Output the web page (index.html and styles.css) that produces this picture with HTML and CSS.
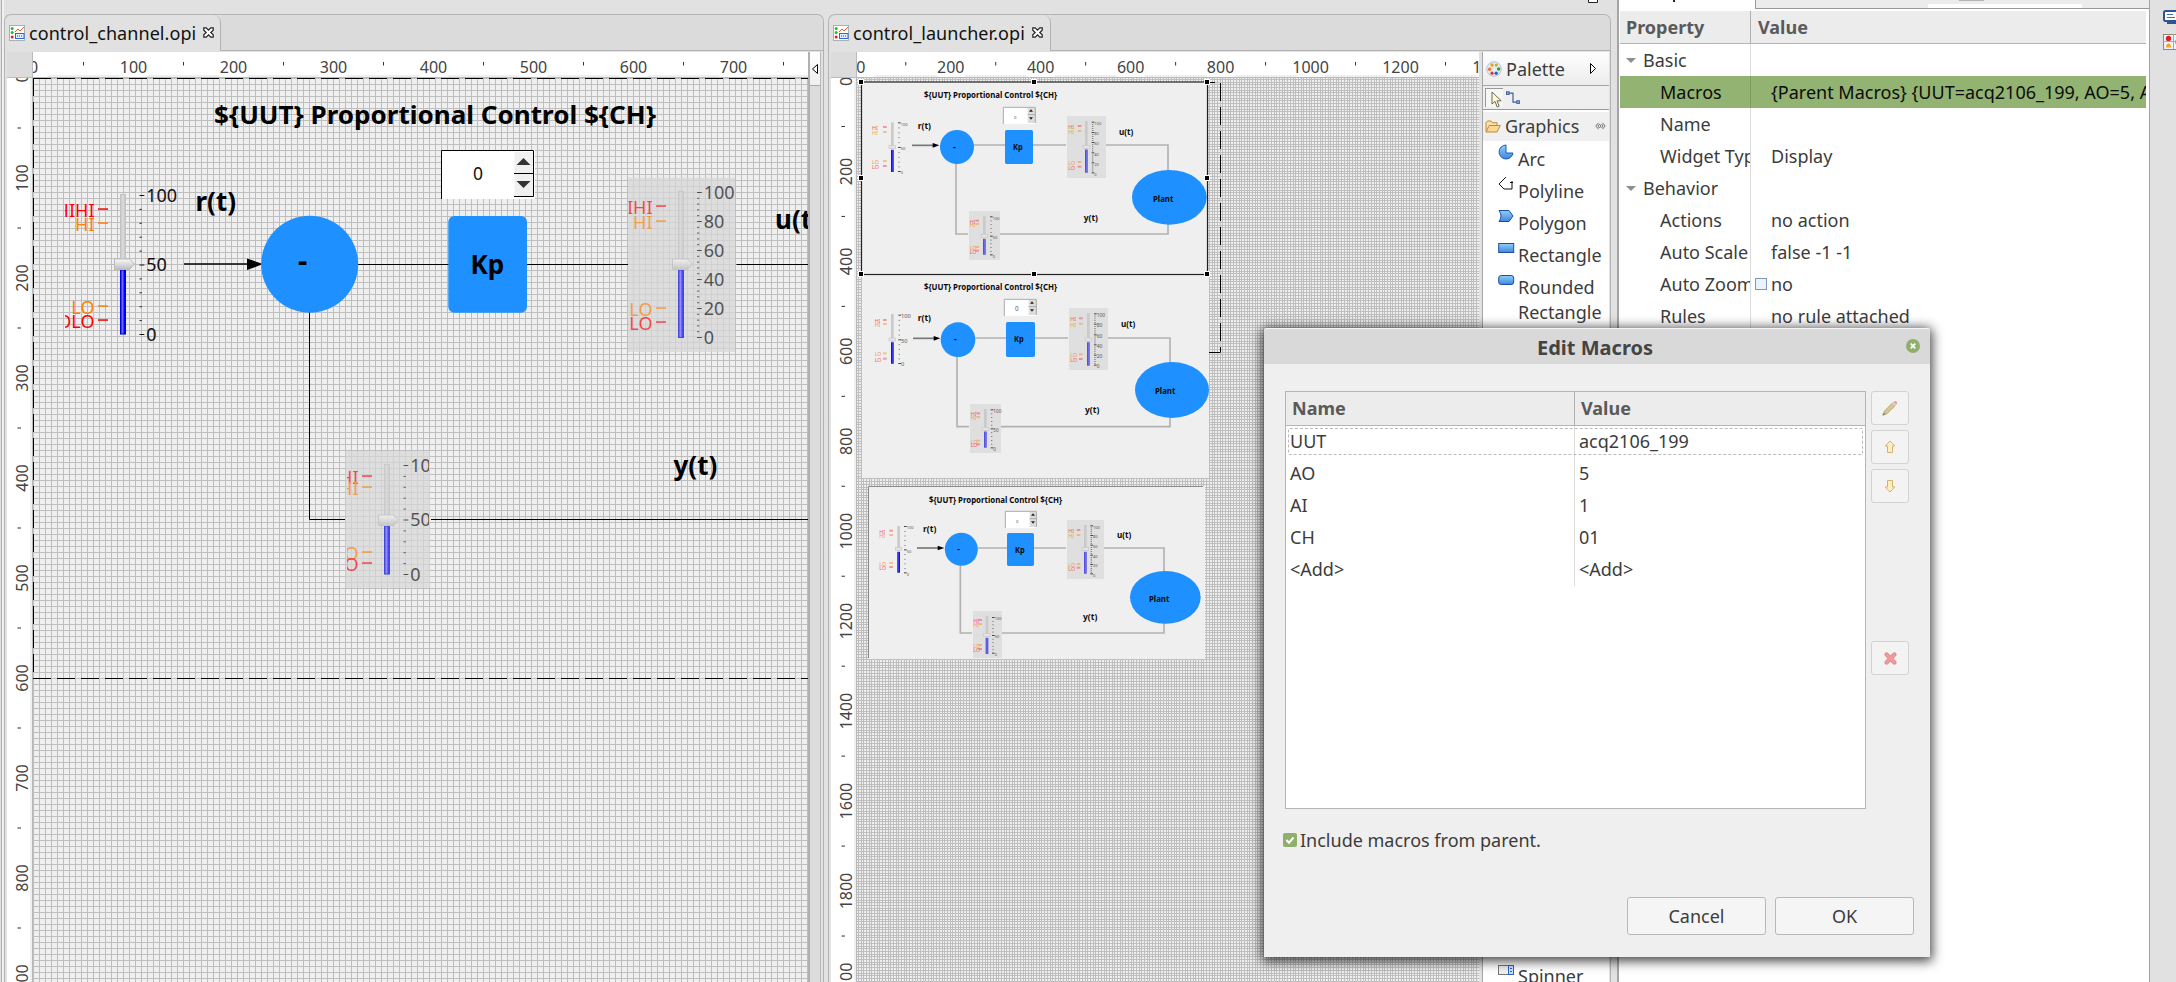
FILE: index.html
```html
<!DOCTYPE html>
<html lang="en">
<head>
<meta charset="utf-8">
<title>OPI Editor</title>
<link rel="stylesheet" href="styles.css">
</head>
<body>
<svg class="defs" width="0" height="0">
  <defs>
    <linearGradient id="track" x1="0" x2="1" y1="0" y2="0"><stop offset="0" stop-color="#c4c4c4"/><stop offset=".5" stop-color="#dedede"/><stop offset="1" stop-color="#bdbdbd"/></linearGradient>
    <linearGradient id="level" x1="0" x2="1" y1="0" y2="0"><stop offset="0" stop-color="#0000ff"/><stop offset=".4" stop-color="#6a6aff"/><stop offset=".8" stop-color="#0000ff"/></linearGradient>
    <linearGradient id="knob" x1="0" x2="0" y1="0" y2="1"><stop offset="0" stop-color="#fafafa"/><stop offset="1" stop-color="#bcbcbc"/></linearGradient>
    <linearGradient id="sky" x1="0" x2="0" y1="0" y2="1"><stop offset="0" stop-color="#8fd0f5"/><stop offset="1" stop-color="#3f86e0"/></linearGradient>
    <symbol id="opi" viewBox="0 0 16 16"><rect x=".5" y=".5" width="15" height="15" fill="#fff" stroke="#a9b0b8"/><circle cx="3.2" cy="3.4" r="1.5" fill="#1fc41f"/><circle cx="3.2" cy="7.6" r="1.5" fill="#1fc41f"/><circle cx="3.2" cy="12" r="1.5" fill="#e02020"/><path d="M6 7l3-3 2 2 4-4" fill="none" stroke="#e86030"/><rect x="6.5" y="8.5" width="8.5" height="5" fill="#e4eefc" stroke="#2a6ad0"/><path d="M8 11h6" stroke="#444" stroke-dasharray="1 1"/></symbol>
    <symbol id="close" viewBox="0 0 11 11"><path d="M.8.8h2.4l2.3 2.4L7.8.8h2.4v2.4L7.8 5.5l2.4 2.3v2.4H7.8L5.5 7.8l-2.3 2.4H.8V7.8l2.4-2.3L.8 3.2z" fill="#fff" stroke="#222" stroke-width="1.2"/></symbol>
    <pattern id="grid6" x="33" y="78" width="6" height="6" patternUnits="userSpaceOnUse"><path d="M0 .5H6M.5 0V6" stroke="#bebebe"/></pattern>
    <pattern id="grid27" x="861" y="82" width="27" height="27" patternUnits="userSpaceOnUse"><path d="M0 .5H27M0 2.5H27M0 5.5H27M0 8.5H27M0 10.5H27M0 13.5H27M0 16.5H27M0 18.5H27M0 21.5H27M0 24.5H27M.5 0V27M2.5 0V27M5.5 0V27M8.5 0V27M10.5 0V27M13.5 0V27M16.5 0V27M18.5 0V27M21.5 0V27M24.5 0V27" stroke="#bebebe"/></pattern>
    <clipPath id="clipA"><rect x="65" y="180" width="130" height="170"/></clipPath>
    <clipPath id="clipB"><rect x="628.5" y="177" width="107" height="175"/></clipPath>
    <clipPath id="clipC"><rect x="347" y="450" width="82" height="140"/></clipPath>
  </defs>
</svg>

<div class="workbench">
  <section class="editor editor-left">
    <header class="tabs">
      <div class="tab tab-channel"><svg class="tab-icon"><use href="#opi"/></svg><span>control_channel.opi</span><svg class="tab-close"><use href="#close"/></svg></div>
      <div class="tab-rest"></div>
    </header>
    <div class="editor-body">
      <div class="sheet sheet-left">
        <div class="corner"></div>
        <svg class="ruler-top" id="topL" viewBox="33 52 775 26" width="775" height="26"></svg>
        <svg class="ruler-side" id="sideL" viewBox="7 78 26 904" width="26" height="904"></svg>
        <svg class="canvas" id="canvasL" viewBox="33 78 775 904" width="775" height="904"></svg>
      </div>
      <div class="flyout"><div class="flyout-btn"><svg width="8" height="12" viewBox="0 0 8 12"><path d="M6.5 1.5v9L1.5 6z" fill="#fff" stroke="#000"/></svg></div></div>
    </div>
  </section>

  <section class="editor editor-right">
    <header class="tabs">
      <div class="tab tab-launcher"><svg class="tab-icon"><use href="#opi"/></svg><span>control_launcher.opi</span><svg class="tab-close"><use href="#close"/></svg></div>
      <div class="tab-rest"><svg class="maximize" width="10" height="3" viewBox="0 0 10 3"><path d="M.5 0v2.500h9V0" fill="#fff" stroke="#222"/></svg></div>
    </header>
    <div class="editor-body">
      <div class="sheet sheet-right">
        <div class="corner"></div>
        <svg class="ruler-top" id="topR" viewBox="857 52 622 26" width="622" height="26"></svg>
        <svg class="ruler-side" id="sideR" viewBox="831 78 26 904" width="26" height="904"></svg>
        <svg class="canvas" id="canvasR" viewBox="857 78 622 904" width="622" height="904"></svg>
      </div>
      <aside class="palette">
        <div class="pal-head">
          <svg width="16" height="16" viewBox="0 0 16 16"><circle cx="8" cy="8" r="7.3" fill="#e3ebf6" stroke="#b4c2d8"/><circle cx="6" cy="4" r="1.7" fill="#f0a010"/><circle cx="10.3" cy="4" r="1.6" fill="#c0b020"/><circle cx="12.6" cy="8" r="1.7" fill="#30a030"/><circle cx="3.6" cy="8.2" r="1.7" fill="#f07820"/><circle cx="6" cy="12.2" r="1.6" fill="#e03030"/><circle cx="10.2" cy="12.2" r="1.7" fill="#2a62c8"/></svg>
          <span>Palette</span>
          <svg class="pal-arrow" width="8" height="13" viewBox="0 0 8 13"><path d="M1.500 1.500v10l5-5z" fill="#fff" stroke="#000"/></svg>
        </div>
        <div class="pal-tools">
          <span class="tool-on"><svg width="12" height="17" viewBox="0 0 12 17"><path d="M1 1v12l3-2.600L6.200 16l2-.9L6 9.800h4.200z" fill="#fffbd8" stroke="#6a6a50"/></svg></span>
          <svg width="14" height="14" viewBox="0 0 14 14"><path d="M2 2.200h5v9h5" fill="none" stroke="#3d5f9a" stroke-width="1.200"/><rect x=".5" y=".8" width="2.600" height="2.600" fill="#9db8e0" stroke="#3d5f9a"/><rect x="10.800" y="9.800" width="2.600" height="2.600" fill="#9db8e0" stroke="#3d5f9a"/></svg>
        </div>
        <div class="pal-group">
          <svg width="16" height="13" viewBox="0 0 16 13"><path d="M1 11.500V2.800L2.500 1h3.600l1.300 1.700H12v2.600" fill="#fbe0a8" stroke="#c08a3a"/><path d="M1 12L4.200 5.500H15.300L12 12z" fill="#fad792" stroke="#c08a3a"/></svg>
          <span>Graphics</span>
          <svg class="pin" width="11" height="8" viewBox="0 0 11 8"><path d="M3.500 .8L.8 4l2.700 3.200M7.500 .8L10.200 4 7.500 7.200M4.500 2L3 4l1.500 2L6 4zM6.500 2L8 4 6.500 6" fill="none" stroke="#666" stroke-width=".9"/></svg>
        </div>
        <ul class="pal-items">
          <li><svg width="17" height="17" viewBox="0 0 17 17"><path d="M8 1A7 7 0 1 0 15 9H8z" fill="url(#sky)" stroke="#1d5cb8"/></svg><span>Arc</span></li>
          <li><svg width="17" height="17" viewBox="0 0 17 17"><path d="M8 1L1 8l5 5h8V5M12 6.500h3" fill="none" stroke="#111"/></svg><span>Polyline</span></li>
          <li><svg width="17" height="17" viewBox="0 0 17 17"><path d="M1 2.500h10L15 8l-4 5.500H1Q5 8 1 2.500z" fill="url(#sky)" stroke="#1d4f9c"/></svg><span>Polygon</span></li>
          <li><svg width="17" height="17" viewBox="0 0 17 17"><rect x=".7" y="3.500" width="15" height="9" fill="url(#sky)" stroke="#1d4f9c"/></svg><span>Rectangle</span></li>
          <li class="two"><svg width="17" height="17" viewBox="0 0 17 17"><rect x=".7" y="3.500" width="15" height="9" rx="2.500" fill="url(#sky)" stroke="#1d4f9c"/></svg><span>Rounded<br>Rectangle</span></li>
        </ul>
        <div class="pal-last"><svg width="17" height="11" viewBox="0 0 17 11"><rect x=".5" y=".5" width="15" height="9" fill="#f0f0f0" stroke="#777"/><rect x="10.500" y=".5" width="5" height="9" fill="#cfe0fa" stroke="#2a62c8"/><path d="M12 3.500h2M12 6.500h2" stroke="#2a62c8"/></svg><span>Spinner</span></div>
      </aside>
    </div>
  </section>

  <section class="props">
    <div class="props-tabs"><div class="props-tab"></div><div class="props-tools"></div></div>
    <div class="props-table">
      <div class="prow phead"><div>Property</div><div>Value</div></div>
      <div class="prow cat"><div><i></i>Basic</div><div></div></div>
      <div class="prow sel"><div>Macros</div><div>{Parent Macros} {UUT=acq2106_199, AO=5, AI=1</div></div>
      <div class="prow"><div>Name</div><div></div></div>
      <div class="prow"><div>Widget Type</div><div>Display</div></div>
      <div class="prow cat"><div><i></i>Behavior</div><div></div></div>
      <div class="prow"><div>Actions</div><div>no action</div></div>
      <div class="prow"><div>Auto Scale</div><div>false -1 -1</div></div>
      <div class="prow check"><div>Auto Zoom</div><div><b></b>no</div></div>
      <div class="prow"><div>Rules</div><div>no rule attached</div></div>
    </div>
  </section>

  <aside class="trim">
    <svg width="14" height="14" viewBox="0 0 14 14"><rect x="1" y="1" width="14" height="10" rx="1.500" fill="#fff" stroke="#2d5596" stroke-width="2"/><path d="M4 4.500h6M4 7.500h8" stroke="#3b6bb5"/><path d="M4 13h10" stroke="#2d5596" stroke-width="2"/></svg>
    <svg width="14" height="16" viewBox="0 0 14 16"><rect x=".5" y=".5" width="14" height="15" fill="#eef4fc" stroke="#8a8a72"/><circle cx="5.500" cy="4.500" r="2.700" fill="#dc2020"/><path d="M0 7.500h14M10.500 0v15" stroke="#9aaecb"/><path d="M3 13.500q0-4 2.500-4t2.500 4z" fill="#f5a623"/><path d="M14 4q-3 4 0 8" fill="#dbe7f7" stroke="#7a98c4"/></svg>
  </aside>
</div>

<div class="dialog">
  <div class="dlg-title"><span>Edit Macros</span><svg class="dlg-close" width="14" height="14" viewBox="0 0 14 14"><circle cx="7" cy="7" r="7" fill="#8fb06c"/><path d="M4.700 4.700l4.600 4.600M9.300 4.700L4.700 9.300" stroke="#fff" stroke-width="1.700"/></svg></div>
  <div class="dlg-main">
    <div class="macros">
      <div class="mrow mhead"><div>Name</div><div>Value</div></div>
      <div class="mrow focus"><div>UUT</div><div>acq2106_199</div></div>
      <div class="mrow"><div>AO</div><div>5</div></div>
      <div class="mrow"><div>AI</div><div>1</div></div>
      <div class="mrow"><div>CH</div><div>01</div></div>
      <div class="mrow"><div>&lt;Add&gt;</div><div>&lt;Add&gt;</div></div>
    </div>
    <div class="side-btns">
      <button class="sbtn"><svg width="16" height="16" viewBox="0 0 16 16"><path d="M.8 15.200L2.600 10.800 10.500 2.900 13.200 5.600 5.200 13.500z" fill="#dcc690" stroke="#b29a68" stroke-width=".8"/><path d="M10 3.400L11.600 1.800 14.300 4.500 12.700 6.100z" fill="#ccd0d8"/><path d="M11.600 1.800Q13 .3 14.600 1.500 16 3 14.300 4.500z" fill="#f09a90"/><path d="M.5 15.500l1.200-3 1.900 1.900z" fill="#888"/></svg></button>
      <button class="sbtn"><svg width="12" height="14" viewBox="0 0 12 14"><path d="M6 1l4.800 5H8.500v6.500h-5V6H1.200z" fill="#fbf0c4" stroke="#d6b26c"/></svg></button>
      <button class="sbtn"><svg width="12" height="14" viewBox="0 0 12 14"><path d="M6 13l4.800-5H8.500V1.500h-5V8H1.200z" fill="#fbf0c4" stroke="#d6b26c"/></svg></button>
      <button class="sbtn del"><svg width="13" height="13" viewBox="0 0 13 13"><path d="M2.600 2.600l7.800 7.800M10.400 2.600l-7.800 7.800" stroke="#dc8888" stroke-width="4.200" stroke-linecap="round"/><path d="M2.600 2.600l7.800 7.800M10.400 2.600l-7.800 7.800" stroke="#f29a9e" stroke-width="2.600" stroke-linecap="round"/></svg></button>
    </div>
  </div>
  <label class="inherit"><svg width="14" height="14" viewBox="0 0 14 14"><rect width="14" height="14" rx="2" fill="#8fb06c"/><path d="M3.500 7l2.500 2.800L10.500 4.500" fill="none" stroke="#fff" stroke-width="2"/></svg><span>Include macros from parent.</span></label>
  <div class="dlg-foot"><button>Cancel</button><button>OK</button></div>
</div>
<script src="script.js"></script>
</body>
</html>
```
FILE: styles.css
```css
* { box-sizing: border-box; }
body { margin: 0; width: 2176px; height: 982px; overflow: hidden; background: #e1e1e1; font: 18px/24px "Noto Sans", sans-serif; color: #3c3c3c; }
.defs { position: absolute; }
svg { display: block; flex: none; }
svg text { font-family: "Noto Sans", sans-serif; }

.workbench { display: flex; width: 2176px; height: 982px; padding-left: 4px; box-shadow: inset 1px 0 #e1e1e1, inset 2px 0 #b0b0b0, inset 4px 0 #f0f0f0; }
.editor { height: 968px; margin-top: 14px; display: flex; flex-direction: column; border: 1px solid #b3b3b3; border-bottom: 0; border-radius: 7px 7px 0 0; background: #e1e1e1; }
.editor-left { width: 820px; }
.editor-right { width: 783px; margin-left: 4px; }
.tabs { display: flex; height: 36px; flex: none; }
.tab { display: flex; align-items: center; border-right: 1px solid #b3b3b3; border-radius: 7px 7px 0 0; padding: 0 0 1px 4px; color: #111; letter-spacing: .06px; }
.tab-channel { width: 216px; }
.tab-launcher { width: 222px; }
.tab-icon { width: 16px; height: 16px; margin-right: 4px; }
.tab-close { width: 11px; height: 11px; margin-left: 7px; }
.tab-rest { flex: 1; background: #dbdbdb; border-bottom: 1px solid #b3b3b3; border-radius: 0 7px 0 0; position: relative; }
.maximize { position: absolute; top: -15px; right: 12px; }
.editor-body { display: flex; padding: 1px 0 0 2px; height: 931px; }
.sheet { display: grid; grid-template-columns: 26px auto; grid-template-rows: 26px 904px; flex: none; }
.corner { background: #dcdcdc; border-right: 1px solid #bbb; border-bottom: 1px solid #bbb; }
.ruler-top, .ruler-side { background: #fff; }
.canvas { background: #efefef; }
.flyout { width: 13px; background: #dcdcdc; border-left: 2px solid #b0b0b0; border-right: 1px solid #b8b8b8; }
.flyout-btn { height: 34px; background: linear-gradient(#fff, #eee); border-bottom: 1px solid #aaa; padding: 11px 0 0 1px; }

.palette { width: 127px; margin-left: 3px; border-left: 1px solid #a6a6a6; background: #fff; position: relative; }
.pal-head { height: 34px; display: flex; align-items: center; padding: 0 0 0 3px; gap: 4px; background: linear-gradient(#fefefe, #ececec); border-bottom: 1px solid #a6a6a6; }
.pal-arrow { margin-left: 20px; }
.pal-tools { height: 24px; display: flex; align-items: center; padding-left: 2px; gap: 3px; background: #efefef; border-bottom: 1px solid #999; }
.tool-on { width: 18px; height: 19px; padding: 2px 0 0 5px; background: #f6f6f6; border-left: 1px solid #999; border-top: 1px solid #999; }
.pal-group { height: 29px; margin-top: 2px; display: flex; align-items: center; padding: 0 0 1px 2px; gap: 4px; background: #f0f0f0; }
.pin { margin-left: 12px; }
.pal-items { list-style: none; margin: 3px 0 0; padding: 0 0 0 15px; }
.pal-items li { display: flex; gap: 3px; height: 32px; }
.pal-items span { padding-top: 3px; line-height: 25px; white-space: nowrap; }
.pal-last { position: absolute; top: 913px; left: 15px; display: flex; gap: 3px; line-height: 22px; }

.props { width: 533px; margin-left: 6px; border-left: 2px solid #a4a4a4; border-right: 1px solid #a4a4a4; background: #fff; }
.props-tabs { display: flex; height: 11px; }
.props-tab { width: 136px; background: linear-gradient(#222, #222) 54px 0 / 2px 2px no-repeat; }
.props-tools { flex: 1; height: 9px; background: linear-gradient(#b4b4b4, #b4b4b4) 203px 0 / 25px 1px no-repeat, linear-gradient(#fff, #fff) 172px 4px / 154px 4px no-repeat #ececec; border-left: 1px solid #999; border-bottom: 1px solid #999; }
.props-table { margin: 0 3px 0 1px; }
.prow { display: grid; grid-template-columns: 131px 1fr; height: 32px; line-height: 32px; white-space: nowrap; }
.prow > div { overflow: hidden; padding-left: 40px; border-right: 1px solid #dcdcdc; }
.prow > div + div { padding-left: 20px; border: 0; }
.prow.phead { height: 33px; background: #ececec; border-bottom: 1px solid #b5b5b5; font-weight: bold; color: #5a5a5a; }
.phead > div { padding-left: 6px; border-color: #b0b0b0; }
.prow.phead > div + div { padding-left: 7px; }
.prow.cat > div { padding-left: 6px; display: flex; align-items: center; }
.cat i { border: 5px solid transparent; border-top-color: #8e8e8e; border-bottom: 0; margin: 0 7px 0 0; }
.prow.sel { background: #92b372; color: #0c0c0c; }
.prow.sel > div { border-color: #7f9f60; }
.prow.check > div + div { display: flex; align-items: center; gap: 4px; padding-left: 4px; }
.check b { width: 12px; height: 12px; background: #e8f3fc; border: 1px solid #8796b0; }
.trim { width: 26px; padding: 10px 0 0 13px; display: flex; flex-direction: column; gap: 10px; }

.dialog { position: absolute; left: 1264px; top: 328px; width: 666px; height: 629px; background: #efefef; border-radius: 3px 3px 0 0; box-shadow: 0 2px 12px 2px rgba(0,0,0,.75); }
.dlg-title { height: 36px; background: #d9d9d9; border-top: 1px solid #f4f4f4; border-radius: 3px 3px 0 0; display: flex; align-items: center; justify-content: center; font-weight: bold; font-size: 20px; position: relative; color: #444; padding: 2px 4px 0 0; }
.dlg-close { position: absolute; right: 10px; top: 10px; }
.dlg-main { display: flex; gap: 5px; padding: 27px 0 0 21px; }
.macros { width: 581px; height: 418px; background: #fff; border: 1px solid #b5b5b5; }
.mrow { display: grid; grid-template-columns: 289px 1fr; height: 32px; line-height: 30px; padding: 0 2px 0 0; }
.mrow > div { padding-left: 4px; border-right: 1px solid #dcdcdc; }
.mrow > div + div { border: 0; }
.mrow.mhead { height: 34px; line-height: 33px; background: #ececec; border-bottom: 1px solid #b5b5b5; font-weight: bold; color: #5a5a5a; }
.mhead > div { border-color: #b0b0b0; padding-left: 6px; }
.focus { position: relative; }
.focus::after { content: ""; position: absolute; left: 2px; right: 2px; top: 2px; bottom: 3px; border: 1px dashed #bbb; border-radius: 2px; }
.side-btns { display: flex; flex-direction: column; gap: 5px; }
button { font: 18px "Noto Sans", sans-serif; color: #3c3c3c; background: #f5f5f5; border: 1px solid #b8b8b8; border-radius: 3px; padding: 0; }
.sbtn { width: 38px; height: 34px; display: flex; align-items: center; justify-content: center; border-color: #d3d3d3; background: #f3f3f3; }
.sbtn.del { margin-top: 133px; }
.inherit { display: flex; align-items: center; gap: 3px; padding: 19px 0 0 19px; }
.dlg-foot { display: flex; justify-content: flex-end; gap: 9px; padding: 45px 16px 0 0; }
.dlg-foot button { width: 139px; height: 38px; }
```
FILE: script.js
```
const $ = id => document.getElementById(id);
const text = (x, y, s, size, o = '') => `<text x="${x}" y="${y}" font-size="${size}" ${o}>${s}</text>`;
const rect = (x0, y0, x1, y1, fill, o = '') => `<rect x="${x0}" y="${y0}" width="${x1 - x0}" height="${y1 - y0}" fill="${fill}" ${o}/>`;
const line = (d, c, w) => `<path d="${d}" fill="none" stroke="${c}" stroke-width="${w}"/>`;

/* Rulers */
function rulers(top, side, x0, y0, xLeft, step, unit, xEnd) {
  let h = '', v = '';
  for (let i = 0; x0 + i * step < xEnd + 20; i++) {
    const x = x0 + i * step;
    h += text(x, 72.7, i * unit, 16, 'text-anchor="middle" fill="#444"') + rect(x + step / 2 - .5, 62, x + step / 2 + .5, 65.5, '#333');
    h += rect(x + 14, 75, x + step - 14, 77, '#efefef');
  }
  for (let i = 0; y0 + i * step < 1010; i++) {
    const y = y0 + i * step, bx = xLeft + 21.3;
    v += `<text transform="translate(${bx} ${y}) rotate(-90)" font-size="16" text-anchor="middle" fill="#444">${i * unit}</text>`;
    v += rect(xLeft + 10.5, y + step / 2 - .5, xLeft + 14, y + step / 2 + .5, '#333');
  }
  $(top).innerHTML = h + rect(0, 77, 2000, 78, '#b8b8b8');
  $(side).innerHTML = v + rect(xLeft + 23, 0, xLeft + 25, 982, '#efefef') + rect(xLeft + 25, 0, xLeft + 26, 982, '#b8b8b8');
}
rulers('topL', 'sideL', 33.5, 78, 7, 100, 100, 808);
rulers('topR', 'sideR', 860.8, 81.5, 831, 89.95, 200, 1479);

/* Slider on the channel display */
function slider(s) {
  let o = '';
  s.alarms.forEach(([y, t], i) => {
    const c = i % 3 ? '#ff8000' : '#ff0000';
    o += rect(s.dash, y - .7, s.dash + 10, y + .8, c) + text(s.dash - 3.5, y + 7.7, t, 18, `text-anchor="end" fill="${c}"`);
  });
  o += rect(s.x + .5, s.y0, s.x + 5.5, s.y1, 'url(#track)', 'stroke="#c2c2c2"');
  o += rect(s.x + .5, s.mid + 6, s.x + 5.5, s.y1, 'url(#level)', 'stroke="#0000e0"');
  o += `<path d="M${s.x - 5.5} ${s.mid - 5}h15l5 5-5 5.500h-15z" fill="url(#knob)" stroke="#bbb"/>`;
  const n = s.labels.length, gap = (s.last - s.first) / (n - 1);
  for (let i = 0; i < n; i++) {
    const y = s.first + i * gap;
    o += rect(s.tick, y - .5, s.tick + 4.8, y + .5, '#111') + text(s.tick + 6.7, y + 6, s.labels[i], 18, 'fill="#111"');
    if (i < n - 1) for (let k = 1; k < 5; k++) o += rect(s.tick, y + k * gap / 5 - .5, s.tick + 2.3, y + k * gap / 5 + .5, '#222');
  }
  return `<g clip-path="url(#${s.clip})" opacity="${s.fade ? .68 : 1}">${o}</g>`;
}
const bold = 'font-weight="bold" fill="#000"';
const blue = '#1e90ff';
$('canvasL').innerHTML =
  rect(33, 78, 808, 982, 'url(#grid6)') +
  `<path d="M33 78.500H808M33.500 78V678M33 678.500H808" stroke="#000" fill="none" stroke-dasharray="18 6"/>` +
  text(214, 124, '${UUT} Proportional Control ${CH}', 25.5, bold + ' textLength="442" lengthAdjust="spacingAndGlyphs"') +
  line('M184 264H250', '#000', 1.6) + '<path d="M247 258.500L263 264l-16 6z"/>' +
  line('M309.500 264V519.500H345M431 519.500H808M357 264.500H449M526 264.500H628M736.500 264.500H808', '#000', 1) +
  `<circle cx="309.700" cy="264.300" r="48.500" fill="${blue}"/>` + text(298, 271, '-', 29, bold) +
  rect(448.3, 216, 527, 312.7, blue, 'rx="6"') + text(470.5, 273.7, 'Kp', 26, bold) +
  text(195.5, 210.7, 'r(t)', 26, bold) + text(775, 228.5, 'u(t)', 26, bold) + text(673.5, 475, 'y(t)', 26, bold) +
  rect(441, 150, 535, 199, '#fff') + rect(514.5, 152, 533, 196, '#f0f0f0') +
  line('M441.500 199V150.500H533.500V196.500H514M514 173.500H533', '#000', 1) +
  '<path d="M516.500 165h14l-7-7zM516.500 181h14l-7 7z" fill="#333"/>' + text(473, 180, '0', 17.5, 'fill="#111"') +
  rect(628, 177.5, 735, 352, 'rgba(215,215,215,.72)') + rect(345.5, 451, 430, 588, 'rgba(215,215,215,.72)') +
  slider({ clip: 'clipA', x: 120, y0: 194.5, y1: 334, mid: 264, dash: 98, tick: 139.5, first: 195.5, last: 334.5, labels: [100, 50, 0], alarms: [[209, 'HIHI'], [223, 'HI'], [306, 'LO'], [320, 'LOLO']] }) +
  slider({ fade: 1, clip: 'clipB', x: 678, y0: 191.5, y1: 337.5, mid: 264, dash: 656, tick: 697, first: 192.5, last: 337.5, labels: [100, 80, 60, 40, 20, 0], alarms: [[206, 'HIHI'], [221, 'HI'], [308, 'LO'], [322, 'LOLO']] }) +
  slider({ fade: 1, clip: 'clipC', x: 384, y0: 464.5, y1: 574, mid: 520, dash: 362, tick: 403.5, first: 465.5, last: 574.5, labels: [100, 50, 0], alarms: [[476, 'HI'], [487, 'HI'], [552, 'LO'], [563, 'LO']] });

/* Linked previews, drawn at one third of their unit size */
function miniSlider(s, live) {
  let o = '';
  const names = ['HI', 'HI', 'LO', 'LO'];
  s.al.forEach((y, i) => {
    const c = i % 3 ? '#f0a050' : '#f46060';
    o += rect(s.d, y - 3, s.d + 11, y + 3, c, 'opacity=".6"') + text(s.tx, y + 9, names[i], 16, `fill="${c}"`);
  });
  o += rect(s.x, s.y0, s.x + 8, s.y1, '#cacaca') + rect(s.x, s.m + 9, s.x + 8, s.y1, live ? '#1010e8' : '#5050e4') +
    rect(s.x + 3, s.m + 9, s.x + 5, s.y1, live ? '#4848f8' : '#7878f0') + rect(s.x - 6, s.m - 4, s.x + 13, s.m + 5, '#e4e4e4', 'stroke="#c8c8c8" stroke-width="2"');
  const n = s.lab.length;
  for (let i = 0; i < n; i++) {
    const y = s.lab[i], v = 100 - i * 100 / (n - 1);
    o += rect(s.l - 8, y - 3, s.l, y, '#444') + text(s.l, y + 7, v, s.fs || 12, 'fill="#555"');
    if (i < n - 1) for (let k = 1; k < 5; k++) { const t = y + (s.lab[i + 1] - y) * k / 5; o += rect(s.l - 7, t - 2, s.l - 3, t, '#555'); }
  }
  return o;
}
function mini(oy, p) {
  const b = 'font-weight="bold" fill="#0a0a0a" lengthAdjust="spacingAndGlyphs"', g = '#b2b2b2';
  const [cx, cy, r] = p.circ, [kx0, ky0, kx1, ky1] = p.kp, [sx, sy, sx1, sy1] = p.spin, [ex, ey, rx, ry] = p.plant;
  const B = p.B.bg, C = p.C.bg;
  return `<g transform="translate(820 ${oy}) scale(.333333)">` +
    text(...p.title, '${UUT} Proportional Control ${CH}', 25, b + ' textLength="399"') +
    line(`M${cx + r} ${p.ly}H${kx0}M${kx1} ${p.ly}H${B[0] - 3}M${B[2] - 2} ${p.ly}H${p.rx}V${ey}M${p.rx} ${ey}V${p.by}H${C[2] - 5}M${C[0] - 3} ${p.by}H${cx - 3}V${cy}`, g, 5) +
    line(`M${p.arr[0]} ${p.arr[1]}h64`, '#777', 5) + `<path d="M${p.arr[0] + 62} ${p.arr[1] - 7}l20 7-20 7z" fill="#000"/>` +
    `<circle cx="${cx}" cy="${cy}" r="${r}" fill="${blue}"/><ellipse cx="${ex}" cy="${ey}" rx="${rx}" ry="${ry}" fill="${blue}"/>` +
    rect(kx0, ky0, kx1, ky1, blue, 'rx="5"') +
    text(cx - 12, cy + 8, '-', 27, b) + text(kx0 + 24, ky0 + 60, 'Kp', 24, b + ' textLength="29"') +
    text(...p.pt, 'Plant', 25, b + ' textLength="61"') + text(...p.r, 'r(t)', 25, b + ' textLength="40"') + text(...p.u, 'u(t)', 25, b + ' textLength="43"') + text(...p.y, 'y(t)', 25, b + ' textLength="43"') +
    rect(sx, sy, sx1, sy1, '#fff') + rect(sx + 74, sy + 3, sx1, sy1 - 3, '#ddd') + line(`M${sx + 1} ${sy1}V${sy + 1}H${sx1 - 1}V${sy1 - 3}M${sx + 74} ${sy + 23}H${sx1}`, '#aaa', 3) +
    `<path d="M${sx + 78} ${sy + 14}h12l-6-7zM${sx + 78} ${sy + 31}h12l-6 7z" fill="#222"/>` + text(sx + 33, sy + 36, '0', p.zf, 'fill="#555"') +
    rect(...B, '#dfdfdf') + rect(...C, '#dfdfdf') + miniSlider(p.A, true) + miniSlider(p.B) + miniSlider(p.C) + '</g>';
}
const handles = [[861, 82], [1034, 82], [1207, 82], [861, 178], [1207, 178], [861, 274], [1034, 274], [1207, 274]]
  .map(([x, y]) => rect(x - 3, y - 3, x + 3, y + 3, '#fff') + rect(x - 2, y - 2, x + 2, y + 2, '#000')).join('');
$('canvasR').innerHTML =
  rect(857, 78, 1479, 982, 'url(#grid27)') +
  '<path d="M861 82.500H1220.500M1220.500 83V352M1220.500 352.500H861" fill="none" stroke="#000" stroke-dasharray="18 6"/>' +
  rect(862, 275, 1209, 478, '#efefef') +
  rect(868, 486, 1205, 659, '#f0f0f0') + rect(869, 487, 1204, 658, '#efefef') + line('M868.500 658V486.500H1203', '#8a8a8a', 1) +
  rect(861, 82, 1207.5, 274.5, '#efefef') +
  mini(0, { title: [312, 294], spin: [549, 321, 647, 372], zf: 13, r: [293, 388], u: [897, 406], y: [791, 664], arr: [276, 436], circ: [411, 441, 51], kp: [555, 390, 639, 492], ly: 435, rx: 1044, by: 702, plant: [1048, 592, 112, 82], pt: [999, 605],
    A: { x: 213, y0: 367, y1: 516, m: 441, d: 189, tx: 156, al: [381, 396, 483, 498], l: 242, lab: [370, 444, 516] },
    B: { bg: [741, 348, 858, 534], x: 795, y0: 363, y1: 518, m: 440, d: 773, tx: 745, al: [378, 393, 486, 500], l: 823, lab: [368, 399, 429, 460, 490, 520] },
    C: { bg: [447, 633, 540, 780], x: 489, y0: 648, y1: 764, m: 708, d: 466, tx: 449, al: [662, 672, 741, 752], l: 518, lab: [652, 710, 766] } }) +
  mini(270, { title: [312, 60], spin: [552, 87, 650, 138], zf: 19, r: [293, 154], u: [903, 171], y: [795, 430], arr: [279, 205], circ: [414, 209, 52], kp: [558, 156, 645, 261], ly: 204, rx: 1050, by: 470, plant: [1056, 360, 111, 84], pt: [1005, 371],
    A: { x: 213, y0: 132, y1: 281, m: 208, d: 189, tx: 164, al: [150, 162, 250, 266], l: 243, lab: [137, 211, 282], fs: 17 },
    B: { bg: [747, 114, 864, 300], x: 801, y0: 129, y1: 287, m: 208, d: 777, tx: 751, al: [145, 161, 253, 267], l: 830, lab: [133, 164, 196, 226, 257, 287], fs: 15 },
    C: { bg: [450, 402, 543, 549], x: 492, y0: 417, y1: 533, m: 476, d: 469, tx: 452, al: [430, 441, 512, 523], l: 520, lab: [421, 478, 535], fs: 14 } }) +
  mini(270, { title: [327, 699], spin: [555, 723, 650, 774], zf: 13, r: [309, 787], u: [891, 804], y: [789, 1050], arr: [291, 834], circ: [424, 838, 49.5], kp: [561, 789, 642, 888], ly: 834, rx: 1032, by: 1089, plant: [1036, 982, 106, 79], pt: [987, 995],
    A: { x: 232, y0: 768, y1: 908, m: 837, d: 208, tx: 178, al: [782, 795, 879, 891], l: 260, lab: [771, 841, 910] },
    B: { bg: [741, 750, 852, 927], x: 792, y0: 765, y1: 911, m: 837, d: 770, tx: 745, al: [780, 795, 882, 893], l: 819, lab: [769, 798, 827, 857, 885, 913] },
    C: { bg: [459, 1023, 546, 1164], x: 497, y0: 1038, y1: 1152, m: 1095, d: 475, tx: 460, al: [1050, 1062, 1125, 1137], l: 524, lab: [1044, 1098, 1151] } }) +
  rect(861.5, 82, 1207.5, 274.5, 'none', 'stroke="#222" stroke-width="1.200"') + handles;
```
